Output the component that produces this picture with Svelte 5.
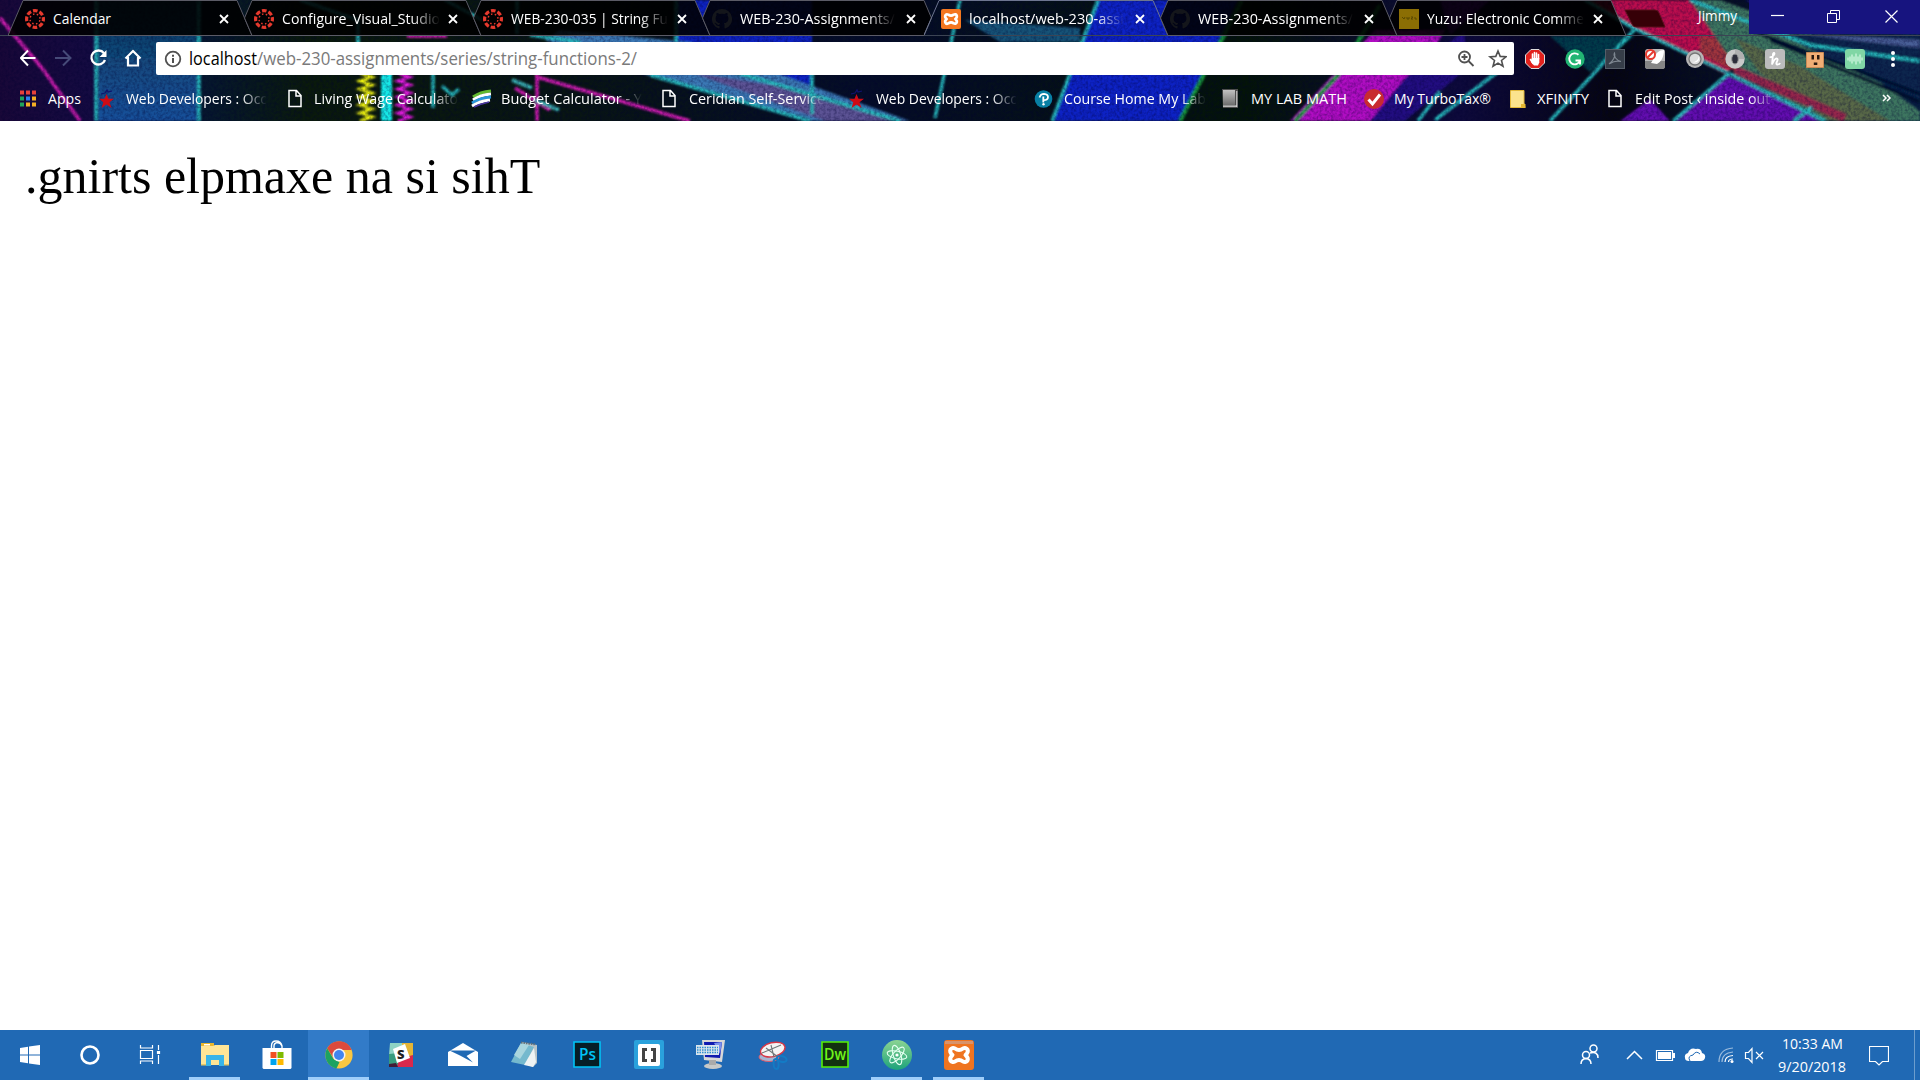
<script>
  const tabs = [
    { icon: 'canvas', title: 'Calendar', w: 58, first: true },
    { icon: 'canvas', title: 'Configure_Visual_Studio', w: 158, fade: true },
    { icon: 'canvas', title: 'WEB-230-035 | String Fu', w: 157, fade: true },
    { icon: 'github', title: 'WEB-230-Assignments/', w: 155, fade: true, beforeActive: true },
    { icon: 'xampp', title: 'localhost/web-230-assi', w: 155, fade: true, active: true },
    { icon: 'github', title: 'WEB-230-Assignments/', w: 155, fade: true },
    { icon: 'yuzu', title: 'Yuzu: Electronic Comme', w: 157, fade: true }
  ];

  // span: distance to the next bookmark, gap: distance from icon to label
  const bookmarks = [
    { icon: 'apps', title: 'Apps', w: 33, span: 78, gap: 12 },
    { icon: 'star', title: 'Web Developers : Occ', w: 141, span: 190, gap: 12, fade: true },
    { icon: 'doc', title: 'Living Wage Calculato', w: 144, span: 184, gap: 10, fade: true },
    { icon: 'budget', title: 'Budget Calculator - Y', w: 141, span: 190, gap: 13, fade: true },
    { icon: 'doc', title: 'Ceridian Self-Service', w: 136, span: 186, gap: 11, fade: true },
    { icon: 'star', title: 'Web Developers : Occ', w: 141, span: 187, gap: 12, fade: true },
    { icon: 'pearson', title: 'Course Home My Lab', w: 142, span: 187, gap: 13, fade: true },
    { icon: 'book', title: 'MY LAB MATH', w: 96, span: 142, gap: 13 },
    { icon: 'check', title: 'My TurboTax®', w: 97, span: 146, gap: 14 },
    { icon: 'note', title: 'XFINITY', w: 52, span: 98, gap: 11 },
    { icon: 'doc', title: 'Edit Post ‹ inside out-', w: 140, span: 200, gap: 11, fade: true }
  ];

  const extensions = ['adblock', 'grammarly', 'acrobat', 'norocket', 'orb', 'ring', 'honey', 'outlet', 'wave'];

  const apps = [
    { icon: 'explorer', open: true },
    { icon: 'store' },
    { icon: 'chrome', open: true, current: true },
    { icon: 'slack' },
    { icon: 'mail' },
    { icon: 'notepad' },
    { icon: 'ps' },
    { icon: 'brackets' },
    { icon: 'keyboard' },
    { icon: 'snip' },
    { icon: 'dw' },
    { icon: 'atom', open: true },
    { icon: 'xampp', open: true }
  ];

  const zigzag = (x, w) =>
    Array.from({ length: 13 }, (_, i) => `${i ? 'L' : 'M'}${x + (i % 2 ? w : 0)} ${73 + i * 4}`).join(' ');

  // A tab tucked behind its neighbour loses the lower corner on that side.
  const tabShape = (tab) =>
    (tab.first ? 'M0 35.5L15 .5' : 'M15 35.500L7.500 18L15 .5') +
    (tab.beforeActive ? 'H229L236.500 18L229 35.500z' : 'H229L244 35.500z');
</script>

{#snippet label(text, w, size, fade)}
  <svg class="label" class:fade width={w} height="22">
    <text x="0" y="16" font-size={size} textLength={w} lengthAdjust="spacingAndGlyphs">{text}</text>
  </svg>
{/snippet}

{#snippet xamppMark()}
  <path d="M11 8.500C7 6.500 4 11 8.500 15 4 19 7 23.500 11 21.500q4-3 8 0C23 23.500 26 19 21.500 15 26 11 23 6.500 19 8.500q-4 3-8 0z" fill="none" stroke="#fff" stroke-width="4" stroke-linejoin="round" />
{/snippet}

{#snippet small(name)}
  <svg width="20" height="20" viewBox="0 0 20 20">
    {#if name === 'canvas'}
      <g stroke="#e5392d" fill="none">
        <circle cx="10" cy="10" r="8.400" stroke-width="3.200" stroke-dasharray="4.600 2" stroke-dashoffset="2.300" />
        <circle cx="10" cy="10" r="5" stroke-width="1.500" stroke-dasharray="1.500 2.427" stroke-dashoffset="-1.200" />
      </g>
    {:else if name === 'github'}
      <path fill="#14161b" d="M10 0a10 10 0 0 0-3.200 19.500c.5.1.7-.2.7-.5v-2c-2.800.6-3.400-1.200-3.400-1.200-.5-1.100-1.100-1.400-1.100-1.400-1-.7 0-.7 0-.7 1 .1 1.600 1.100 1.600 1.100.9 1.500 2.400 1.100 2.900.8.1-.6.4-1.100.7-1.300-2.300-.3-4.600-1.200-4.600-5 0-1.100.4-2 1-2.700-.1-.2-.4-1.200.1-2.600 0 0 .9-.3 2.800 1a9 9 0 0 1 5 0c1.900-1.300 2.800-1 2.800-1 .5 1.400.2 2.400.1 2.600.6.7 1 1.600 1 2.700 0 3.800-2.300 4.700-4.600 5 .4.300.7.900.7 1.900V19c0 .3.2.6.7.5A10 10 0 0 0 10 0z" />
    {:else if name === 'xampp'}
      <rect width="20" height="20" rx="2" fill="#f4761f" />
      <g transform="scale(.667)">{@render xamppMark()}</g>
    {:else if name === 'yuzu'}
      <rect width="20" height="20" fill="#8b6e04" />
      <path d="M3 8l2 2 1-2M8 8v2h2V8m2 0h2l-2 2h2m2-2v2h2" stroke="#594800" fill="none" />
    {:else if name === 'apps'}
      <g>
        <path fill="#e8413a" d="M0 1.500h4v4H0zM6 1.500h4v4H6zM12 1.500h4v4h-4z" />
        <path fill="#1fa35c" d="M0 7.500h4v4H0zM0 13.500h4v4H0z" />
        <path fill="#2d7ff0" d="M6 7.500h4v4H6z" />
        <path fill="#f4ae24" d="M12 7.500h4v4h-4zM6 13.500h4v4H6zM12 13.500h4v4h-4z" />
      </g>
    {:else if name === 'star'}
      <path fill="#cf0b14" d="M8.500 5l2 4.700H16l-4.500 3.500L13.500 19l-5-3.600-5 3.600 1.800-5.800L1 9.700h5.500z" />
      <path d="M3 5l4-1 2-3 1 2 4-1" stroke="#10126e" fill="none" stroke-width="1.200" />
    {:else if name === 'doc'}
      <path d="M1 1.500h7.500L13 6.500V17.500H1zM8 1.500V7h5" stroke="#fff" stroke-width="1.500" fill="none" />
    {:else if name === 'budget'}
      <g fill="none" stroke-width="3">
        <path d="M1 8Q8 3 19 2" stroke="#62b82f" />
        <path d="M1 11Q8 6 19 5" stroke="#fff" />
        <path d="M0 14Q8 9 19 8" stroke="#2996d8" />
        <path d="M0 17Q8 12 18 11" stroke="#fff" />
        <path d="M2 18Q8 15 17 13" stroke="#4b36a1" stroke-width="1.500" />
      </g>
    {:else if name === 'pearson'}
      <circle cx="8.500" cy="10" r="8.800" fill="#087fa4" />
      <path d="M4.500 8.500Q5.500 4.800 9 4.800q4 .3 4 3.200 0 3.500-5 3.200M8.300 7.500v6" fill="none" stroke="#fff" stroke-width="1.800" />
      <circle cx="8.500" cy="15.300" r="1.200" fill="#fff" />
    {:else if name === 'book'}
      <defs><linearGradient id="cover" x2="0" y2="1"><stop offset="0" stop-color="#c2c2c2" /><stop offset="1" stop-color="#6e6e6e" /></linearGradient></defs>
      <path fill="#4e4e4e" d="M0 0h16v19H1z" />
      <path fill="url(#cover)" d="M1 1h12v15H1z" />
      <path fill="#ddd" d="M1 16.500h14v1.200H1zM14.300 2h1v16h-1z" />
    {:else if name === 'check'}
      <circle cx="10" cy="10" r="10" fill="#c82b2f" />
      <path d="M4.500 10.500l4 4.500L16 5.500" fill="none" stroke="#fff" stroke-width="3" />
    {:else if name === 'note'}
      <path fill="#fbe38e" stroke="#e3b93a" d="M.5 1.500h13.500v12.500l1 4.500H.5z" />
      <path fill="#e5b832" d="M11 19v-4h4.500v4z" />
    {:else if name === 'adblock'}
      <path fill="#e2211c" stroke="#ddd" d="M6 .5h8L19.500 6v8L14 19.500H6L.5 14V6z" />
      <path d="M7.500 11V5m2 4V3.500M11.500 9V4m2 6V5.500M5.500 10.500l2.500 4" stroke="#fff" stroke-width="1.600" stroke-linecap="round" />
      <path fill="#fff" d="M6.800 9h7.500v4.500L13 16.500H9l-2.500-3z" />
    {:else if name === 'grammarly'}
      <circle cx="10" cy="10" r="9.700" fill="#22b573" />
      <path d="M13.500 5.800a5.500 5.500 0 1 0 1.500 5.700M10.500 11.500H15v4" fill="none" stroke="#fff" stroke-width="1.900" />
    {:else if name === 'acrobat'}
      <rect x=".5" y=".5" width="19" height="19" fill="#363d48" stroke="#555d68" />
      <path d="M4 15C8 12 11 7 9.500 4c-1.500 3 2 7.500 6.500 8.500-4-1-8 0-11 2" fill="none" stroke="#7e8791" stroke-width="1.200" />
    {:else if name === 'norocket'}
      <rect width="20" height="20" rx="3" fill="#b9b9b9" />
      <path d="M0 12h20v5q0 3-3 3H3q-3 0-3-3z" fill="#858585" />
      <path d="M19 1c-5 0-8 3-10 8L6 14l6 1c4-2 7-7 7-14z" fill="#fff" />
      <circle cx="5.500" cy="5.500" r="4.500" fill="#fff" stroke="#e63b31" stroke-width="2" />
      <path d="M2 9l7-7" stroke="#e63b31" stroke-width="2" />
    {:else if name === 'orb'}
      <circle cx="10" cy="10" r="9" fill="#b4b4b4" />
      <circle cx="10" cy="10" r="6" fill="#dedede" stroke="#777" stroke-width="1.300" />
      <path d="M7 13q6 0 7-6 1 8-7 6z" fill="#fff" />
    {:else if name === 'ring'}
      <circle cx="10" cy="10" r="9.700" fill="#c9c9c9" />
      <path d="M10 .3a9.700 9.700 0 0 1 9.700 9.700H10z" fill="#b0b0b0" />
      <ellipse cx="10" cy="10" rx="3.300" ry="5" fill="#2d2d3a" stroke="#999" />
    {:else if name === 'honey'}
      <rect width="20" height="20" rx="3" fill="#bcbcbc" />
      <path d="M4.500 8.500Q9.500 7 9.500 4.500 9 3 8 5L7 15.500Q9.500 9.500 11.500 9.500t.5 3 .5 3 2.500-1.500" fill="none" stroke="#fff" stroke-width="1.800" />
    {:else if name === 'outlet'}
      <path fill="#f0ae75" stroke="#c98a55" d="M1.500 3.500h17v15h-17z" />
      <path fill="#29190f" d="M6.500 6H9v4.500H6.500zM12 6h2.500v4.500H12zM8.800 13.500h3.500v2.500H8.800z" />
    {:else if name === 'wave'}
      <rect width="20" height="20" rx="3" fill="#80d6a5" />
      <path d="M3 8.500v3m2-4v5m2-7v9m2-7v5m2-8v11m2-8v5m2-7v9m2-6v3" stroke="#e5fff0" stroke-width="1" />
    {/if}
  </svg>
{/snippet}

{#snippet large(name)}
  <svg width="30" height="30" viewBox="0 0 30 30">
    {#if name === 'explorer'}
      <path fill="#e9b72d" d="M1 3h13v4H1z" />
      <path fill="#ffe596" d="M1 6h12l2-1h14v20H1z" />
      <path fill="#fff" d="M4 4h6v1.500H4z" />
      <path fill="#39b4e8" d="M6 15h18v11h-5v-6h-8v6H6z" />
      <path fill="#e5c766" d="M1 24h5v1.500H1zM24 24h5v1.500h-5z" />
    {:else if name === 'store'}
      <path d="M9.500 10V6q0-5 4.500-5 5 0 6 5v4M12 9V6q0-3 3.500-3.500Q19 3 20 6v3" fill="none" stroke="#fff" stroke-width="1.400" />
      <path fill="#fff" d="M.5 8h29v20l-1 1h-27l-1-1z" />
      <path fill="#f25022" d="M8.500 12h6v6h-6z" /><path fill="#7fba00" d="M15.500 12h6v6h-6z" />
      <path fill="#00a4ef" d="M8.500 19h6v6h-6z" /><path fill="#ffb900" d="M15.500 19h6v6h-6z" />
    {:else if name === 'chrome'}
      <circle cx="15" cy="15" r="13.600" fill="#fac741" />
      <path fill="#dc4a3d" d="M3.200 8.200A13.600 13.600 0 0 1 27.700 10H15L9.500 18z" />
      <path fill="#1da261" d="M3.200 8.200L9.500 19l6 3-3 6.400A13.600 13.600 0 0 1 3.200 8.200z" />
      <circle cx="15" cy="15" r="6.500" fill="#f3f3f3" /><circle cx="15" cy="15" r="5" fill="#4285ee" />
    {:else if name === 'slack'}
      <path fill="#8ed3c4" d="M4 3h13v12H3z" /><path fill="#e5b535" d="M16 3h11v13H16z" />
      <path fill="#379b7d" d="M3 14l10-1v12H3z" /><path fill="#d9284c" d="M13 19l14-4v12H11z" />
      <path fill="#431b36" d="M3 24l7-1 2 4H3z" />
      <path fill="#fff" d="M7 9l12-5 5 14-13 5z" />
      <text x="11" y="19" font-size="13" font-weight="800" fill="#222">S</text>
    {:else if name === 'mail'}
      <path fill="#fff" d="M0 12L15 3l15 9v14H0z" />
      <path fill="#2069b4" d="M1.500 10.500L28 10.500 18.500 16 25 22.500 12 15.500z" />
    {:else if name === 'notepad'}
      <path fill="#b9c5c9" d="M12 2l15 3v18l-4 4-8-3z" />
      <path fill="#75b9ce" d="M11 3l13 4-9 18L1 22z" />
      <path fill="#a9d5de" d="M11 3l8 2-9 14-6-4z" /><path fill="#eef3f4" d="M24 8l2 14-3 5-9-2z" />
      <path d="M11 2.500l15 2" stroke="#5e6f78" stroke-width="2" stroke-dasharray="1.500 1" />
    {:else if name === 'ps'}
      <path fill="#061e26" stroke="#00c3f5" stroke-width="1.600" d="M2 2h26v25H2z" />
      <text x="7" y="20" font-size="16" font-weight="600" fill="#00c3f5" textLength="17" lengthAdjust="spacingAndGlyphs">Ps</text>
    {:else if name === 'brackets'}
      <rect width="30" height="29" rx="2" fill="#2aa1dc" />
      <rect x="4" y="4" width="22" height="22" rx="2" fill="#fff" />
      <path d="M13 9.500H9.500v11H13M17 9.500h3.500v11H17" fill="none" stroke="#444" stroke-width="3" />
    {:else if name === 'keyboard'}
      <path fill="#d8d8d8" d="M6 0h23l-3 22-18-2z" /><path fill="#101bb0" d="M8 2h18l-2 16-15-1z" />
      <path fill="#7991ee" d="M18 3l8-1-2 12z" />
      <ellipse cx="17" cy="26" rx="9" ry="3" fill="#c7c9c8" /><path fill="#aaa" d="M13 20h7v5h-7z" />
      <path fill="#dbe5ec" d="M0 5h23v10H0z" />
      <path d="M1 7.500h21M1 10h21M1 12.500h21" stroke="#2f8ed0" stroke-width="1.500" stroke-dasharray="1.500 1" />
    {:else if name === 'snip'}
      <ellipse cx="11" cy="17" rx="10" ry="4.500" fill="#a6b5d1" stroke="#d85b6c" />
      <ellipse cx="14.500" cy="9.500" rx="12.500" ry="7" fill="#f6f4f4" stroke="#d83745" stroke-width="1.500" transform="rotate(-14 15 8.500)" />
      <path d="M4 13L23 5M13 5l3 12M8 8l12 9" stroke="#717779" stroke-width="1.100" />
      <g fill="none" stroke="#137bc5" stroke-width="2"><ellipse cx="24" cy="19" rx="5" ry="2.800" transform="rotate(15 24 18)" /><ellipse cx="18" cy="24" rx="2.500" ry="5" transform="rotate(-5 18 23)" /></g>
    {:else if name === 'dw'}
      <path fill="#123210" stroke="#55f005" stroke-width="1.600" d="M2 2h26v25H2z" />
      <text x="4" y="20" font-size="16" font-weight="600" fill="#70f51b" textLength="22" lengthAdjust="spacingAndGlyphs">Dw</text>
    {:else if name === 'atom'}
      <defs><linearGradient id="dome" x2="0" y2="1"><stop offset="0" stop-color="#8bd492" /><stop offset="1" stop-color="#1da37b" /></linearGradient></defs>
      <circle cx="15" cy="15" r="15" fill="url(#dome)" />
      <g fill="none" stroke="#e5fff1" stroke-width="1.100">
        <ellipse cx="15" cy="15" rx="10" ry="3.800" transform="rotate(12 15 15)" />
        <ellipse cx="15" cy="15" rx="10" ry="3.800" transform="rotate(72 15 15)" />
        <ellipse cx="15" cy="15" rx="10" ry="3.800" transform="rotate(132 15 15)" />
      </g><circle cx="15" cy="15" r="1.600" fill="#fff" />
    {:else if name === 'xampp'}
      <rect width="30" height="30" rx="3" fill="#ef7420" /><path d="M1 1h28v3H1z" fill="#d8936b" />
      {@render xamppMark()}
    {/if}
  </svg>
{/snippet}

<div class="screen">
  <header>
    <svg class="wallpaper" width="1920" height="121" viewBox="0 0 1920 121">
      <defs>
        <filter id="grain" x="0" y="0" width="100%" height="100%">
          <feTurbulence type="fractalNoise" baseFrequency=".35" numOctaves="2" seed="4" />
          <feColorMatrix values="0 0 0 0 0  0 0 0 0 0  0 0 0 0 0.03  2.2 0 0 0 -.8" />
        </filter>
        <filter id="soft"><feGaussianBlur stdDeviation="1.100" /></filter>
        <linearGradient id="base">
          <stop offset="0" stop-color="#190838" /><stop offset=".05" stop-color="#140b42" />
          <stop offset=".11" stop-color="#06182c" /><stop offset=".16" stop-color="#0a1a0b" />
          <stop offset=".3" stop-color="#081513" /><stop offset=".45" stop-color="#050d28" />
          <stop offset=".65" stop-color="#041408" /><stop offset=".76" stop-color="#0e0a3c" />
          <stop offset=".84" stop-color="#060610" /><stop offset="1" stop-color="#071f42" />
        </linearGradient>
        <linearGradient id="glass" x2="0" y2="1"><stop offset="0" stop-color="#0a3858" /><stop offset=".5" stop-color="#12497c" /><stop offset="1" stop-color="#15509a" /></linearGradient>
      </defs>
      <rect width="1920" height="121" fill="url(#base)" />
      <g filter="url(#soft)">
        <path fill="url(#glass)" d="M98 0h102v121H98z" />
        <path fill="#0c20c0" d="M676 0h136v110L676 72z" />
        <path fill="#3b78b4" d="M545 40l15-10 130 12 220 79H810L650 76z" />
        <path fill="#5b5294" d="M690 72l100 16 115 33h-80z" />
        <path fill="#175377" d="M965 20l115 8v14H1000z" />
        <path fill="#0f20c4" d="M1098 0h140l-58 121H1052z" />
        <path fill="#b00cc2" d="M1375 30h70l-35 60-30 31h-90z" />
        <path fill="#231080" d="M1405 78l60-48v40l-60 51h-35z" />
        <path fill="#6310b0" d="M1440 0h50l-40 35zM1728 76l102 45h-155zM1620 121l30-22 20 22z" />
        <path fill="#063b49" d="M1550 36h85l-45 36z" />
        <path fill="#bb0c4e" d="M1590 0h105l65 45-35 29-88-43z" />
        <path fill="#a0343e" d="M1700 36l60 8 20 22-40 8-40-20z" />
        <path fill="#3e755e" d="M1690 0h30l90 32 110 79v10h-100l-80-48z" />
        <path fill="#596847" d="M1735 38l65 28 90 55h-60l-70-48z" />
        <path fill="#07264d" d="M1780 34h140v65l-60-25z" />
        <path fill="#4a5f97" d="M1800 34l120 6v8z" />
        <path fill="#17147c" d="M1745 0h175v34l-120-5z" />
        <path d="M1735 70l110 48" stroke="#94284c" stroke-width="9" />
        <g stroke="#28b8bb" stroke-width="3.500" fill="none">
          <path d="M96 0v121M199 0v121M300 0l58 20v25M445 0l37 20M517 0v34M676 0v42M812 72v42M530 35l50 7M650 75l160 46M735 72l165 49M1098 0l-46 121M960 0l-25 118M1440 92l-22 29M433 72v36M442 86l10 9 7-6" />
          <path d="M1585 0l50 29-85 92M1635 29l95 45 95 47M1728 74l-55 47M1690 0l120 45 110 16M1812 107l-18 14M1500 70l-65 50" />
        </g>
        <path d="M1770 40l150 62M1750 30l170 64" stroke="#03102c" stroke-width="3" />
        <g stroke="#169a3b" stroke-width="4" fill="none"><path d="M1242 0l-62 121M1380 5l-42 70-43 46" /></g>
        <g stroke="#d01cb0" stroke-width="3.500" fill="none"><path d="M0 18l42 50 38 53M407 36h40M537 72v49M537 77l153 44M515 88l35 22" /></g>
        <path d="M512 80l20 8M535 100l24 10" stroke="#3ab0b4" stroke-width="4" />
        <path fill="#19e8e7" d="M381 72h11v49h-11z" />
        <path d={zigzag(360, 12)} stroke="#f4f810" stroke-width="3" fill="none" />
        <path d={zigzag(398, 12)} stroke="#e51ae0" stroke-width="3" fill="none" />
      </g>
      <rect width="1920" height="121" filter="url(#grain)" opacity=".35" />
    </svg>

    <div class="tabstrip">
      {#each tabs as tab}
        <div class="tab">
          <svg class="shape" width="244" height="36" viewBox="0 0 244 36">
            {#if tab.active}
              <path d="M0 35L15 .5h214l15 35" fill="none" stroke="#6d7590" />
            {:else}
              <path d={tabShape(tab)} fill="#000" fill-opacity=".88" stroke="#5b5b66" />
            {/if}
          </svg>
          <div class="favicon">{@render small(tab.icon)}</div>
          <div class="title">{@render label(tab.title, tab.w, 15, tab.fade)}</div>
          <svg class="close" width="10" height="10"><path d="M1 1l8 8M9 1L1 9" stroke="#fff" stroke-width="1.800" /></svg>
        </div>
      {/each}
      <svg class="newtab" width="42" height="19"><path d="M1 1h30q3 0 4 3l6 14H12q-3 0-4-3z" fill="#360007" stroke="#58101c" /></svg>
      <div class="user">{@render label('Jimmy', 39, 15, false)}</div>
      <div class="window">
        <svg width="57" height="34"><path d="M22 15.500h13" stroke="#fff" stroke-width="1.200" /></svg>
        <svg width="58" height="34"><path d="M21.500 13.500h9v9h-9zM24.500 13v-2.500h9v9H31" stroke="#fff" fill="none" /></svg>
        <svg width="56" height="34"><path d="M21.500 10.500l12 12M33.500 10.500l-12 12" stroke="#fff" stroke-width="1.200" /></svg>
      </div>
    </div>

    <div class="toolbar">
      <svg class="nav" width="136" height="24" viewBox="0 0 136 24" fill="none" stroke="#fff" stroke-width="2">
        <path d="M15.500 12H1M8 4.500L.8 12 8 19.500" />
        <path d="M35 12h15M43 4.500l7.500 7.500-7.500 7.500" stroke="#464a78" />
        <path d="M84 7.200A7 7 0 1 0 85 14" stroke-width="2.300" /><path d="M86.500 4v7h-7z" fill="#fff" stroke="none" />
        <path d="M105.500 12.500L113 5l7.500 7.500M108 11v8.500h10V11" stroke-width="2.200" />
      </svg>
      <div class="address">
        <svg width="18" height="18"><circle cx="9" cy="9" r="7.300" fill="none" stroke="#505050" stroke-width="1.800" /><path d="M9 8v5M9 4.800v2" stroke="#505050" stroke-width="2" /></svg>
        <svg class="url" width="460" height="30">
          <text x="0" y="21" font-size="18" fill="#000" textLength="68" lengthAdjust="spacingAndGlyphs">localhost</text>
          <text x="68" y="21" font-size="18" fill="#7a7a7a" textLength="380" lengthAdjust="spacingAndGlyphs">/web-230-assignments/series/string-functions-2/</text>
        </svg>
        <svg class="zoom" width="50" height="20" fill="none" stroke="#505050" stroke-width="1.800">
          <circle cx="7.500" cy="8" r="5.500" /><path d="M11.500 12l5 5M4.500 8h6M7.500 5v6" />
          <path d="M41 2l2.200 5.400 5.800.4-4.500 3.700 1.500 5.700-5-3.100-5 3.100 1.500-5.700L33 7.800l5.800-.4z" stroke-width="1.600" />
        </svg>
      </div>
      <div class="extensions">
        {#each extensions as name}<div class="ext">{@render small(name)}</div>{/each}
      </div>
      <svg class="menu" width="6" height="18" fill="#fff"><circle cx="3" cy="3" r="2" /><circle cx="3" cy="9" r="2" /><circle cx="3" cy="15" r="2" /></svg>
    </div>

    <div class="bookmarks">
      {#each bookmarks as b}
        <div class="bookmark" style:width="{b.span}px">
          <div class="bicon" style:margin-right="{b.gap}px">{@render small(b.icon)}</div>
          {@render label(b.title, b.w, 15, b.fade)}
        </div>
      {/each}
      <svg class="more" width="10" height="10"><path d="M1 1l3 3-3 3M5 1l3 3-3 3" fill="none" stroke="#fff" stroke-width="1.500" /></svg>
    </div>
  </header>

  <main>.gnirts elpmaxe na si sihT</main>

  <footer>
    <svg class="system" width="184" height="50" viewBox="0 0 184 50">
      <path fill="#fff" d="M20 18l8-1.200V24.500h-8zM29 16.600l11-1.600v9.500H29zM20 25.500h8V33.300L20 32zM29 25.500h11V35l-11-1.600z" />
      <circle cx="90" cy="25" r="8.500" fill="none" stroke="#fff" stroke-width="2.600" />
      <g fill="none" stroke="#fff" stroke-width="1.200"><path d="M140.500 20.500h12v8h-12zM140.500 15v3h12v-3M140.500 34v-3h12v3M158.500 15v5M158.500 25v9" /><path fill="#fff" d="M157.500 21.500h2v2h-2z" /></g>
    </svg>
    <div class="apps">
      {#each apps as app}
        <div class="app" class:open={app.open} class:current={app.current}>{@render large(app.icon)}</div>
      {/each}
    </div>
    <div class="tray">
      <svg width="190" height="50" viewBox="0 0 190 50" fill="none" stroke="#fff" stroke-width="1.500">
        <circle cx="23.500" cy="18.500" r="3.500" /><circle cx="16" cy="25" r="3.500" />
        <path d="M11 34q0-5 5-5.500 5 .5 5 5.500M20 23q8-2 8 5" />
        <path d="M57 29l7.500-7.500L72 29" />
        <path d="M86.500 20.500h16v10h-16z" stroke-width="1.200" /><path fill="#fff" stroke="none" d="M88 22h13v7H88zM103 23h2v5h-2z" />
        <path fill="#fff" stroke="none" d="M115 28q-1-4 3-5 2-6 8-4 5-1 6 4 4 1 3 5-1 3-4 3h-12q-4 0-4-3z" />
        <path d="M120 31q-3-5 3-6 3-5 7-1" stroke="#2069b4" stroke-width="1" />
        <g stroke-width="1.200"><path opacity=".55" d="M149 32q0-13 14-14M152 32q0-9 11-10" /><path d="M155 32q0-6 8-6.500M158.500 32q0-3 4.500-3" /></g><circle cx="162" cy="31.500" r="1.500" fill="#fff" stroke="none" />
        <path d="M175.500 22.500h3l3.500-4v14l-3.500-4h-3z" stroke-width="1.200" />
      </svg>
      <svg class="mute" width="10" height="10"><path d="M1 1l7 7M8 1L1 8" stroke="#fff" stroke-width="1.200" /></svg>
      <div class="clock">{@render label('10:33 AM', 61, 15, false)}{@render label('9/20/2018', 68, 15, false)}</div>
      <svg class="action" width="20" height="22"><path d="M.5 1.500h19v15h-6l-3.500 3.500-3.500-3.500h-6z" fill="none" stroke="#fff" stroke-width="1.200" /></svg>
      <div class="desktop"></div>
    </div>
  </footer>
</div>

<style>
  :global(body) { margin: 0; overflow: hidden; background: #fff; }
  .screen { width: 1920px; height: 1080px; display: flex; flex-direction: column; font-family: "Open Sans", "Noto Sans", sans-serif; }
  svg { display: block; flex: none; }
  header { position: relative; height: 121px; flex: none; overflow: hidden; background: #080c20; }
  .wallpaper { position: absolute; inset: 0; }
  .tabstrip, .toolbar, .bookmarks { position: relative; display: flex; }
  .tabstrip { height: 36px; padding-left: 8px; box-sizing: border-box; border-bottom: 1px solid #3c4454; }
  .tab { position: relative; width: 229px; height: 36px; flex: none; display: flex; align-items: flex-start; }
  .shape { position: absolute; left: 0; top: 0; }
  .favicon { position: relative; margin: 9px 8px 0 17px; }
  .title { position: relative; width: 159px; margin-top: 8px; }
  .close { position: relative; margin: 14px 0 0 7px; }
  .label { fill: #fff; overflow: visible; }
  .fade { mask-image: linear-gradient(90deg, #000 82%, transparent 100%); }
  .newtab { margin: 9px 0 0 13px; }
  .user { margin: 5px 0 0 32px; }
  .window { display: flex; margin-left: auto; background: #17147f; height: 34px; }
  .toolbar { height: 39px; align-items: center; margin-top: 3px; }
  .nav { margin: 1px 0 2px 20px; }
  .address { width: 1358px; height: 33px; background: #fff; border-radius: 2px; display: flex; align-items: center; padding-left: 8px; box-sizing: border-box; }
  .url { margin-left: 7px; }
  .zoom { margin-left: auto; margin-right: 7px; }
  .extensions { display: flex; margin-left: 11px; }
  .ext { width: 40px; }
  .menu { margin-left: 5px; }
  .bookmarks { height: 43px; padding-left: 20px; align-items: center; margin-top: -1px; }
  .bookmark { display: flex; align-items: center; flex: none; }
  .bicon { width: 16px; }
  .bicon :global(svg) { overflow: visible; }
  .more { margin-left: 74px; margin-top: 1px; }
  main { flex: 1; padding: 26px 25px; font: 50px/58px "Liberation Serif", serif; color: #000; }
  footer { height: 50px; flex: none; background: #2069b4; display: flex; }
  .apps { display: flex; }
  .app { position: relative; width: 61px; margin-right: 1px; height: 50px; display: grid; place-items: center; box-sizing: border-box; padding-bottom: 0; }
  .open::after { content: ""; position: absolute; left: 5px; right: 5px; bottom: 0; height: 3px; background: #9fcefa; }
  .current { background: #327bc8; }
  .current::after { left: 0; right: 0; }
  .tray { display: flex; margin-left: auto; align-items: center; }
  .mute { margin-left: -5px; }
  .mute, .action { margin-top: 1px; }
  .clock { width: 70px; margin-left: 12px; display: flex; flex-direction: column; align-items: center; gap: 1px; }
  .action { margin-left: 22px; }
  .desktop { width: 5px; height: 50px; margin-left: 25px; border-left: 1px solid #6c9dcd; }
</style>
